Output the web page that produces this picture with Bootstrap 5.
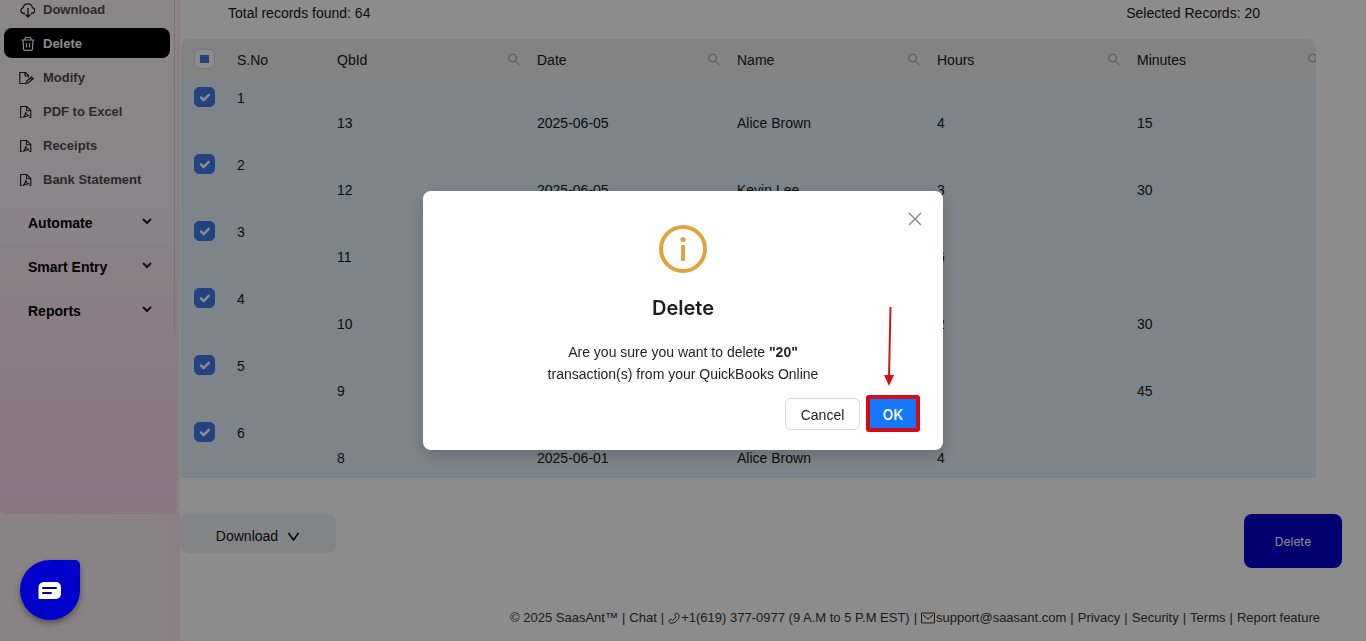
<!DOCTYPE html>
<html lang="en">
<head>
<meta charset="utf-8">
<meta name="viewport" content="width=device-width, initial-scale=1">
<title>Delete records</title>
<link href="https://cdn.jsdelivr.net/npm/bootstrap@5.3.0/dist/css/bootstrap.min.css" rel="stylesheet">
<style>
:root { --ui: Inter, "Liberation Sans", sans-serif; --arial: "Liberation Sans", Arial, sans-serif; }
body { font-family: var(--arial); font-size: 14px; line-height: 22px; color: #161616; background: #fff; overflow: hidden; }
svg { display: block; flex: none; }

/* side menu */
.side { width: 180px; flex: none; background: linear-gradient(90deg, #fdf1f5, #fbeaf0); }
.side-panel { width: 177px; height: calc(100vh - 127px); border-radius: 0 0 6px 6px; overflow: hidden;
  background: linear-gradient(180deg, #fdf6f8 0, #fbf3f8 38%, #fbe1f2 66%, #fad7f0 100%); }
.side-menu { width: 175px; padding: 0 4px 2px 4px; border-right: 1px solid #dccfd6; }
.side-tools { margin-top: -6px; gap: 4px; }
.side-link { height: 30px; padding: 1px 0 0 15px; gap: 8px; border-radius: 8px; font: 600 13px/20px var(--arial); color: #4b4b50; text-decoration: none; }
.side-link svg { width: 16px; height: 16px; color: #222; }
.side-link.active { background: #000; color: #fff; }
.side-link.active svg { color: #fff; }
.side-groups { padding-top: 7px; }
.side-group { height: 44px; width: 100%; padding: 0 17px 0 24px; border: 0; background: none; font: 600 14px/20px var(--arial); color: #000; }

/* records */
.summary { height: 39px; padding: 2px 106px 0 48px; }
.grid-frame { height: calc(100vh - 202px); margin-left: 1px; margin-right: 50px; border-radius: 8px 8px 0 0; overflow: hidden; background: #e6f3fc; }
.grid { width: 1148px; table-layout: fixed; border-collapse: collapse; }
.grid th { height: 39px; padding: 2px 9px 0 8px; background: #edeeed; font-weight: 400; }
.grid td { height: 67px; padding: 9px 8px 0; vertical-align: top; }
.grid td.value { padding-top: 34px; }
.grid .pick { padding: 0 0 0 13px; }
.grid td.pick { padding-top: 9px; }
.grid .form-check-input { display: block; width: 21px; height: 20px; margin: 0; border: 1px solid #d9d9d9; border-radius: 5px; }
.grid .form-check-input:checked { background-color: #3e79ea; border-color: #3e79ea; background-size: 17px; }
.grid .form-check-input:indeterminate { border-color: #d9d9d9; background: #fff linear-gradient(#3e79ea, #3e79ea) center / 9px 8px no-repeat; }
.find { padding: 0; border: 0; background: none; color: #9a9a9a; }
.actions { padding: 36px 24px 0 0; }
.btn-export { width: 156px; height: 39px; border-radius: 8px; background: #eef1f3 !important; border: 0; font-size: 14px; color: #111 !important; padding: 6px 0 0; gap: 9px; }
.btn-remove { width: 98px; height: 54px; border: 0; border-radius: 8px; background: #0000c8 !important; color: #fff !important; font: 12px/20px var(--ui); padding: 2px 0 0; }
.foot { padding: 39px 46px 0 0; font-size: 13px; color: #333; white-space: nowrap; gap: 4px; }
.foot a { color: inherit; text-decoration: none; gap: 1px; }

/* chat bubble */
.chat { position: fixed; left: 20px; bottom: 21px; z-index: 1070; width: 60px; height: 60px; padding: 2px 0 0; border: 0; border-radius: 50% 5px 50% 50%; background: #0000cb; box-shadow: 0 3px 6px rgba(0,0,0,.4); }
.modal-backdrop { opacity: .45 !important; }

/* confirmation */
.confirm { max-width: 520px; --bs-modal-margin: 0px; }
.confirm .modal-content { border: 0; border-radius: 8px; padding: 34px 23px 18px; box-shadow: 0 6px 16px rgba(0,0,0,.2); color: #1f1f1f; }
.confirm h1 { font: 600 20px/28px var(--ui); margin: 21px 0 19px; }
.confirm p { margin: 0 0 10px; font-size: 14px; }
.confirm-buttons { gap: 6px; }
.shut { position: absolute; right: 21px; top: 21px; padding: 0; border: 0; background: none; color: #858585; }
.btn-no { width: 75px; height: 32px; padding: 2px 0 0; border: 1px solid #d9d9d9; border-radius: 6px; font-size: 14px; line-height: 20px; color: #1f1f1f; background: #fff; }
.btn-yes { width: 54px; height: 37px; padding: 2px 0 0; border: 4px solid #d30d17 !important; border-radius: 3px; background: #1677ff !important; font: 600 14px/20px var(--ui); color: #fff !important; }
.pointer { position: absolute; right: 48px; top: 116px; }
</style>
</head>
<body>
<div class="d-flex vh-100">
  <nav class="side" aria-label="Menu">
    <div class="side-panel">
      <div class="side-menu">
        <div class="side-tools d-flex flex-column">
          <a href="#" class="side-link d-flex align-items-center"><svg viewBox="0 0 16 16" fill="none" stroke="currentColor" stroke-width="1.300"><path d="M6 11.500H5a3 3 0 0 1-.8-5.900 4.700 4.700 0 0 1 9.200 0 3 3 0 0 1-.8 5.900h-.8M9 6v9M6.500 12.500 9 15l2.500-2.500"/></svg>Download</a>
          <a href="#" class="side-link active d-flex align-items-center"><svg viewBox="0 0 16 16" fill="none" stroke="currentColor" stroke-width="1.200"><path d="M2.500 4h13M6 4V2.500a1 1 0 0 1 1-1h4a1 1 0 0 1 1 1V4M4 4l.5 9a1.500 1.500 0 0 0 1.500 1.400h6a1.500 1.500 0 0 0 1.500-1.400L14 4M7.500 7v4.500M10.500 7v4.500"/></svg>Delete</a>
          <a href="#" class="side-link d-flex align-items-center"><svg viewBox="0 0 16 16" fill="none" stroke="currentColor" stroke-width="1.200"><path d="M6 13.500H.8v-11h5.700l3 3v2M6 2.500V6h3.500M7 13.500l.6-2.300 5-4.200 1.600 1.600-4.900 4.200z"/><path d="m11.400 8 1.600 1.700"/></svg>Modify</a>
          <a href="#" class="side-link d-flex align-items-center"><svg viewBox="0 0 16 16" fill="none" stroke="currentColor" stroke-width="1.100"><path id="pdf" d="M3 13.500H1.600v-11h6.200l4 4v7h-1.500M7.500 2.500v4.300h4M4 13.500c1.700-1 2.500-3 2.700-5.500.4 2.400 1.500 3.600 3.800 3.800-2.200-.1-4.200.3-6.500 1.700"/></svg>PDF to Excel</a>
          <a href="#" class="side-link d-flex align-items-center"><svg viewBox="0 0 16 16" fill="none" stroke="currentColor" stroke-width="1.100"><use href="#pdf"/></svg>Receipts</a>
          <a href="#" class="side-link d-flex align-items-center"><svg viewBox="0 0 16 16" fill="none" stroke="currentColor" stroke-width="1.100"><use href="#pdf"/></svg>Bank Statement</a>
        </div>
        <div class="side-groups">
          <button type="button" class="side-group d-flex align-items-center justify-content-between">Automate<svg width="12" height="12" viewBox="0 0 12 12" fill="none" stroke="#222" stroke-width="2"><path d="m2 2 4 4 4-4"/></svg></button>
          <button type="button" class="side-group d-flex align-items-center justify-content-between">Smart Entry<svg width="12" height="12" viewBox="0 0 12 12" fill="none" stroke="#222" stroke-width="2"><path d="m2 2 4 4 4-4"/></svg></button>
          <button type="button" class="side-group d-flex align-items-center justify-content-between">Reports<svg width="12" height="12" viewBox="0 0 12 12" fill="none" stroke="#222" stroke-width="2"><path d="m2 2 4 4 4-4"/></svg></button>
        </div>
      </div>
    </div>
  </nav>

  <main class="flex-grow-1 overflow-hidden">
    <div class="summary d-flex justify-content-between"><span>Total records found: 64</span><span>Selected Records: 20</span></div>
    <div class="grid-frame">
      <table class="grid">
        <colgroup><col style="width:48px"><col style="width:100px"><col><col><col><col><col></colgroup>
        <thead><tr>
          <th class="pick"><input id="all" class="form-check-input" type="checkbox" aria-label="Select all"></th>
          <th>S.No</th>
          <th><div class="d-flex justify-content-between align-items-center">QbId<button type="button" class="find" aria-label="Search QbId"><svg width="13" height="13" viewBox="0 0 13 13" fill="none" stroke="currentColor"><circle id="lens" cx="5.500" cy="5" r="4"/><path id="handle" d="m8.500 8 4 4"/></svg></button></div></th>
          <th><div class="d-flex justify-content-between align-items-center">Date<button type="button" class="find" aria-label="Search Date"><svg width="13" height="13" viewBox="0 0 13 13" fill="none" stroke="currentColor"><use href="#lens"/><use href="#handle"/></svg></button></div></th>
          <th><div class="d-flex justify-content-between align-items-center">Name<button type="button" class="find" aria-label="Search Name"><svg width="13" height="13" viewBox="0 0 13 13" fill="none" stroke="currentColor"><use href="#lens"/><use href="#handle"/></svg></button></div></th>
          <th><div class="d-flex justify-content-between align-items-center">Hours<button type="button" class="find" aria-label="Search Hours"><svg width="13" height="13" viewBox="0 0 13 13" fill="none" stroke="currentColor"><use href="#lens"/><use href="#handle"/></svg></button></div></th>
          <th><div class="d-flex justify-content-between align-items-center">Minutes<button type="button" class="find" aria-label="Search Minutes"><svg width="13" height="13" viewBox="0 0 13 13" fill="none" stroke="currentColor"><use href="#lens"/><use href="#handle"/></svg></button></div></th>
        </tr></thead>
        <tbody>
          <tr><td class="pick"><input class="form-check-input" type="checkbox" checked aria-label="Row 1"></td><td>1</td><td class="value">13</td><td class="value">2025-06-05</td><td class="value">Alice Brown</td><td class="value">4</td><td class="value">15</td></tr>
          <tr><td class="pick"><input class="form-check-input" type="checkbox" checked aria-label="Row 2"></td><td>2</td><td class="value">12</td><td class="value">2025-06-05</td><td class="value">Kevin Lee</td><td class="value">3</td><td class="value">30</td></tr>
          <tr><td class="pick"><input class="form-check-input" type="checkbox" checked aria-label="Row 3"></td><td>3</td><td class="value">11</td><td></td><td></td><td class="value">6</td><td></td></tr>
          <tr><td class="pick"><input class="form-check-input" type="checkbox" checked aria-label="Row 4"></td><td>4</td><td class="value">10</td><td></td><td></td><td class="value">2</td><td class="value">30</td></tr>
          <tr><td class="pick"><input class="form-check-input" type="checkbox" checked aria-label="Row 5"></td><td>5</td><td class="value">9</td><td></td><td></td><td></td><td class="value">45</td></tr>
          <tr><td class="pick"><input class="form-check-input" type="checkbox" checked aria-label="Row 6"></td><td>6</td><td class="value">8</td><td class="value">2025-06-01</td><td class="value">Alice Brown</td><td class="value">4</td><td></td></tr>
        </tbody>
      </table>
    </div>
    <div class="actions d-flex justify-content-between align-items-start">
      <button type="button" class="btn btn-export d-flex align-items-center justify-content-center">Download<svg width="13" height="10" viewBox="0 0 13 10" fill="none" stroke="currentColor" stroke-width="1.600" stroke-linejoin="round"><path d="m1.500 1 5 7 5-7"/></svg></button>
      <button type="button" class="btn btn-remove">Delete</button>
    </div>
    <footer class="foot d-flex justify-content-end">
      <span>© 2025 SaasAnt™</span><span>|</span>
      <a href="#">Chat</a><span>|</span>
      <a href="#" class="d-flex align-items-center"><svg width="12" height="12" viewBox="0 0 12 12" fill="none" stroke="currentColor"><path d="M8.500.8 11.200 3c.3 4-4 8.500-8.400 8.300L.7 9.300 3 7l1.600 1.300C6 7.600 7.200 6.400 8 4.900L6.600 3.300z"/></svg>+1(619) 377-0977 (9 A.M to 5 P.M EST)</a><span>|</span>
      <a href="#" class="d-flex align-items-center"><svg width="14" height="12" viewBox="0 0 14 12" fill="none" stroke="currentColor"><path d="M.5 1h13v10H.5zM2 3l5 4 5-4"/></svg>support@saasant.com</a><span>|</span>
      <a href="#">Privacy</a><span>|</span>
      <a href="#">Security</a><span>|</span>
      <a href="#">Terms</a><span>|</span>
      <a href="#">Report feature</a>
    </footer>
  </main>
</div>

<div class="modal-backdrop show"></div>
<div class="modal d-block" role="dialog" aria-modal="true" aria-labelledby="ask">
  <div class="modal-dialog modal-dialog-centered confirm">
    <div class="modal-content text-center">
      <button type="button" class="shut" aria-label="Close"><svg width="14" height="14" viewBox="0 0 14 14" stroke="currentColor" stroke-width="1.400"><path d="m1 1 12 12M13 1 1 13"/></svg></button>
      <svg class="mx-auto" width="48" height="48" viewBox="0 0 48 48"><circle cx="24" cy="24" r="22" fill="none" stroke="#e2a33f" stroke-width="4"/><circle cx="24" cy="14.500" r="2.600" fill="#e2a33f"/><rect x="22" y="20" width="4" height="16" rx="1" fill="#e2a33f"/></svg>
      <h1 id="ask">Delete</h1>
      <p>Are you sure you want to delete <strong>"20"</strong><br>transaction(s) from your QuickBooks Online</p>
      <div class="confirm-buttons d-flex justify-content-end align-items-center">
        <button type="button" class="btn btn-no">Cancel</button>
        <button type="button" class="btn btn-yes">OK</button>
      </div>
      <svg class="pointer" width="12" height="79" viewBox="0 0 12 79"><path d="M7.500 0 6 70" stroke="#c51a1d" stroke-width="2"/><path d="M1 68h10L6 79z" fill="#d8100f"/></svg>
    </div>
  </div>
</div>

<button type="button" class="chat" aria-label="Chat"><svg class="mx-auto" width="24" height="18" viewBox="0 0 24 18"><path d="M6 0h12a5 5 0 0 1 5 5v7a5 5 0 0 1-5 5H1.500a1 1 0 0 1-1-1V5.500A5.500 5.500 0 0 1 6 0z" fill="#fff"/><path d="M5 6h13M5 11h8" stroke="#0000a8" stroke-width="2" stroke-linecap="round"/></svg></button>

<script src="https://cdn.jsdelivr.net/npm/bootstrap@5.3.0/dist/js/bootstrap.bundle.min.js"></script>
<script>document.getElementById('all').indeterminate = true;</script>
</body>
</html>
